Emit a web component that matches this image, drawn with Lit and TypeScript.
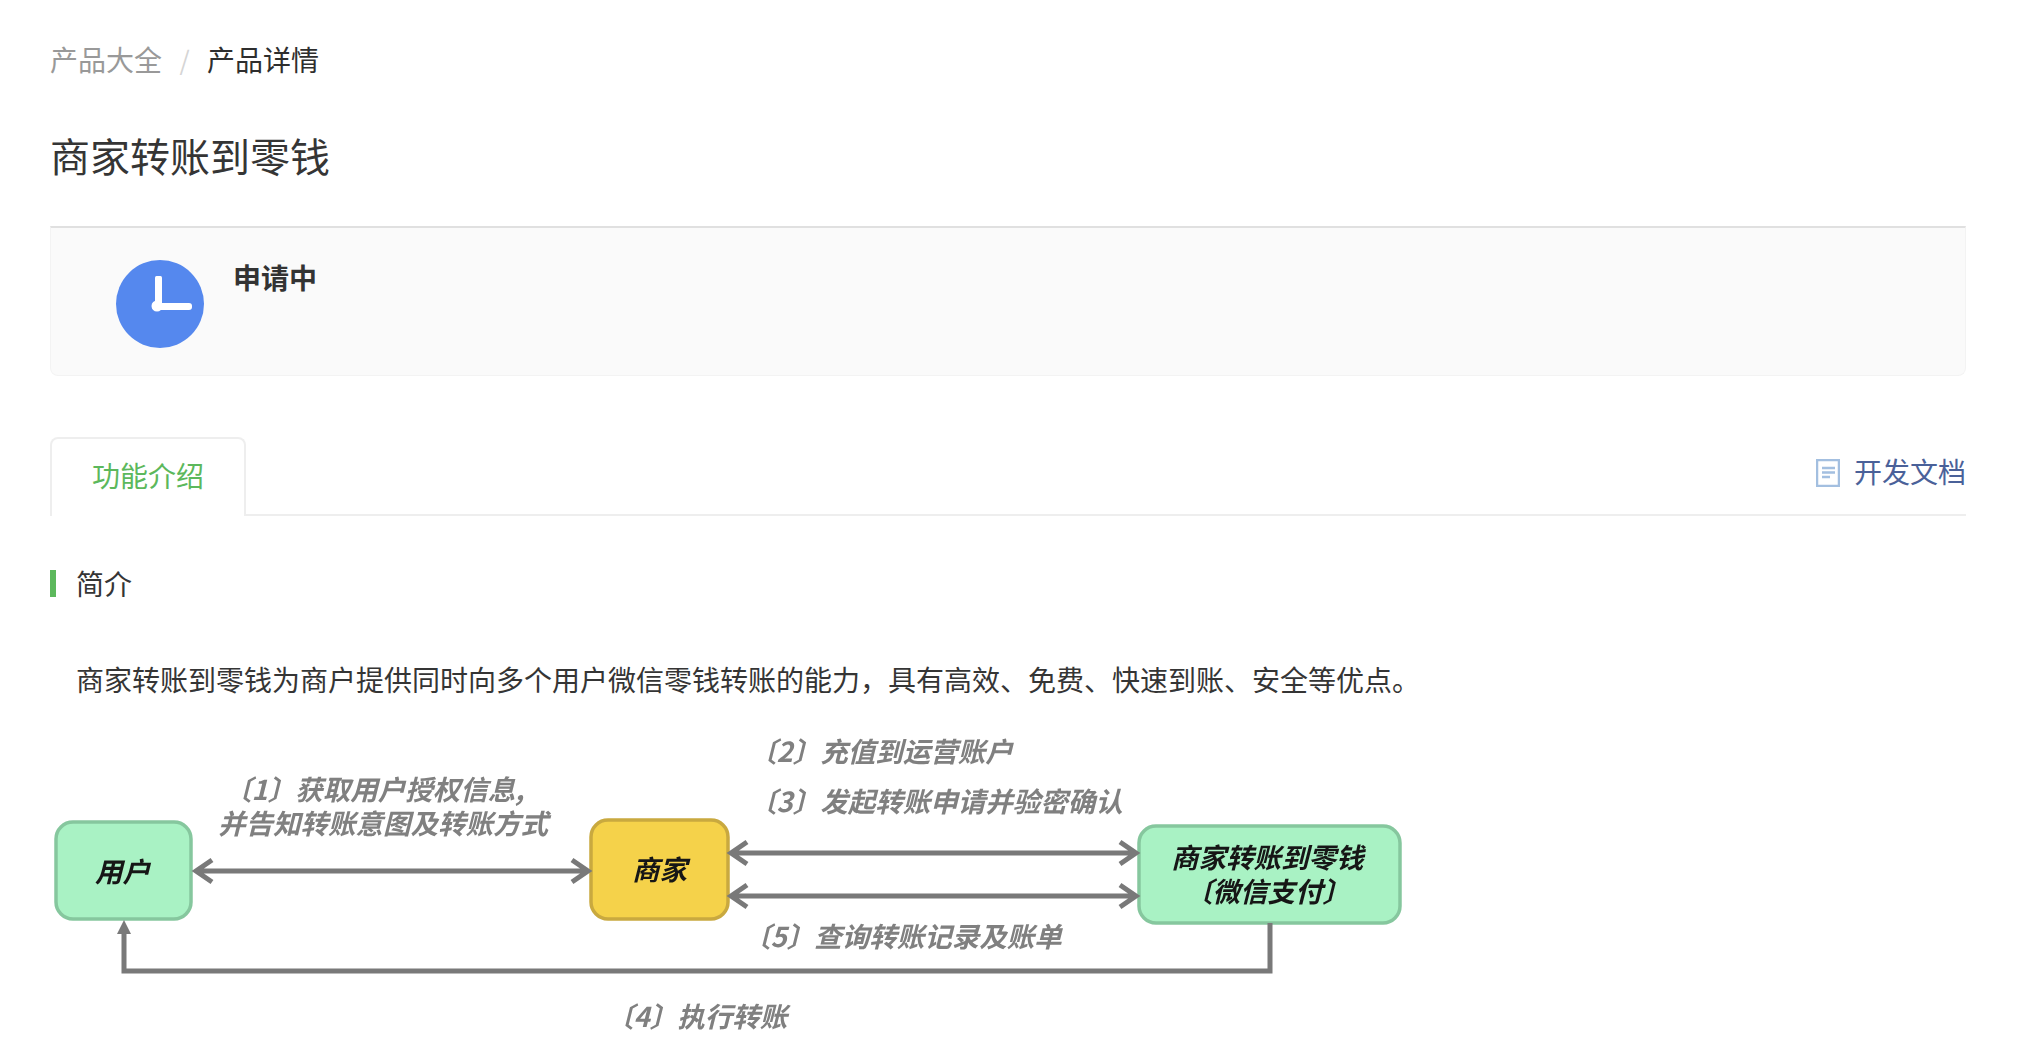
import { LitElement, html, css, svg } from "lit";
import { customElement } from "lit/decorators.js";

const LABELS: [number, number, string, string][] = [
  [224, 788, "〔1〕获取用户授权信息,", "gray"],
  [218, 822, "并告知转账意图及转账方式", "gray"],
  [749, 750, "〔2〕充值到运营账户", "gray"],
  [749, 799.500, "〔3〕发起转账申请并验密确认", "gray"],
  [743, 934.500, "〔5〕查询转账记录及账单", "gray"],
  [606, 1014.500, "〔4〕执行转账", "gray"],
  [95, 870, "用户", "dark"],
  [632, 868, "商家", "dark"],
  [1171, 856, "商家转账到零钱", "dark"],
  [1185, 890, "〔微信支付〕", "dark"],
];

const doubleArrow = (x1: number, x2: number, y: number) => svg`
  <path class="line" d="M${x1 + 2} ${y}H${x2 - 2}M${x1 + 18} ${y - 11}L${x1 + 2} ${y}L${x1 + 18} ${y + 11}M${x2 - 18} ${y - 11}L${x2 - 2} ${y}L${x2 - 18} ${y + 11}"/>`;

@customElement("app-root")
export class AppRoot extends LitElement {
  static styles = css`
    :host {
      display: block;
      box-sizing: border-box;
      height: 1056px;
      overflow: hidden;
      padding: 39px 72px 0 50px;
      background: #fff;
      color: #353535;
      font-family: "Noto Sans CJK SC", "Noto Sans", sans-serif;
      font-size: 28px;
    }
    .crumbs {
      display: flex;
      line-height: 40px;
      color: #999;
    }
    .sep {
      width: 45px;
      text-align: center;
      color: #d5d5d5;
      font-size: 26px;
    }
    .current {
      color: #2e2e2e;
    }
    h1 {
      margin: 46px 0 0;
      font-size: 40px;
      font-weight: 400;
      line-height: 60px;
    }
    .status {
      box-sizing: border-box;
      height: 150px;
      margin-top: 41px;
      padding: 32px 0 0 65px;
      display: flex;
      gap: 30px;
      background: #fafafa;
      border: 1px solid #f3f3f3;
      border-top: 2px solid #e0e0e0;
      border-radius: 0 0 8px 8px;
    }
    .clock {
      width: 88px;
      height: 88px;
      flex: none;
    }
    .status-text {
      margin: -3px 0 0 -1px;
      font-size: 28px;
      font-weight: 700;
      line-height: 40px;
      color: #333;
    }
    .tabs {
      box-sizing: border-box;
      height: 79px;
      margin-top: 61px;
      display: flex;
      justify-content: space-between;
      border-bottom: 2px solid #eee;
    }
    .tab {
      box-sizing: border-box;
      width: 196px;
      height: 79px;
      padding-top: 16px;
      text-align: center;
      line-height: 40px;
      color: #5cb85c;
      background: #fff;
      border: 2px solid #eee;
      border-bottom: none;
      border-radius: 8px 8px 0 0;
    }
    .doc {
      display: flex;
      align-items: center;
      gap: 14px;
      height: 68px;
      color: #4a6199;
    }
    .doc svg {
      width: 24px;
      height: 28px;
      margin-top: 3px;
    }
    .section {
      margin-top: 54px;
      display: flex;
      align-items: center;
      gap: 21px;
      height: 27px;
      line-height: 27px;
    }
    .bar {
      width: 6px;
      height: 27px;
      background: #5cb85c;
    }
    .section span:last-child {
      margin-left: -1px;
    }
    p {
      margin: 62px 0 0;
      padding-left: 26px;
      line-height: 40px;
      white-space: nowrap;
    }
    .diagram {
      display: block;
      margin-top: 21px;
      filter: blur(0.6px);
    }
    .line {
      fill: none;
      stroke: #797979;
      stroke-width: 5;
    }
    .label {
      font-size: 27.5px;
      font-weight: 700;
      font-style: italic;
      dominant-baseline: central;
    }
    .gray {
      fill: #808080;
    }
    .dark {
      fill: #161616;
    }
  `;

  render() {
    return html`
      <nav class="crumbs">
        <span>产品大全</span><span class="sep">/</span><span class="current">产品详情</span>
      </nav>
      <h1>商家转账到零钱</h1>
      <section class="status">
        <svg class="clock" viewBox="0 0 88 88">
          <circle cx="44" cy="44" r="44" fill="#5588ee" />
          <rect x="39" y="16" width="7" height="31" rx="1.5" fill="#fff" />
          <rect x="36" y="43" width="40" height="7" rx="3" fill="#fff" />
          <circle cx="41" cy="46" r="5.5" fill="#fff" />
        </svg>
        <div class="status-text">申请中</div>
      </section>
      <div class="tabs">
        <div class="tab">功能介绍</div>
        <div class="doc">
          <svg viewBox="0 0 24 28" fill="none" stroke="#a3bfe0" stroke-width="2.500">
            <rect x="1" y="1" width="22" height="26" />
            <path d="M6 9h13M6 13.500h13M6 18h8" />
          </svg>
          <span>开发文档</span>
        </div>
      </div>
      <div class="section"><span class="bar"></span><span>简介</span></div>
      <p>商家转账到零钱为商户提供同时向多个用户微信零钱转账的能力，具有高效、免费、快速到账、安全等优点。</p>
      <svg class="diagram" width="1360" height="336" viewBox="50 720 1360 336">
        <rect x="56" y="822" width="135" height="97" rx="17" fill="#a9f2c4" stroke="#86c79e" stroke-width="3.500" />
        <rect x="591" y="820" width="137" height="99" rx="17" fill="#f5d24a" stroke="#c9a93f" stroke-width="3.500" />
        <rect x="1139" y="826" width="261" height="97" rx="17" fill="#a9f2c4" stroke="#86c79e" stroke-width="3.500" />
        ${doubleArrow(194, 590, 871)}
        ${doubleArrow(729, 1138, 853)}
        ${doubleArrow(729, 1138, 896)}
        <path class="line" d="M1270 923V971H124V926" />
        <path d="M124 920L117 934H131Z" fill="#797979" />
        ${LABELS.map(
          ([x, y, text, tone]) => svg`<text class="label ${tone}" x=${x} y=${y}>${text}</text>`
        )}
      </svg>
    `;
  }
}
